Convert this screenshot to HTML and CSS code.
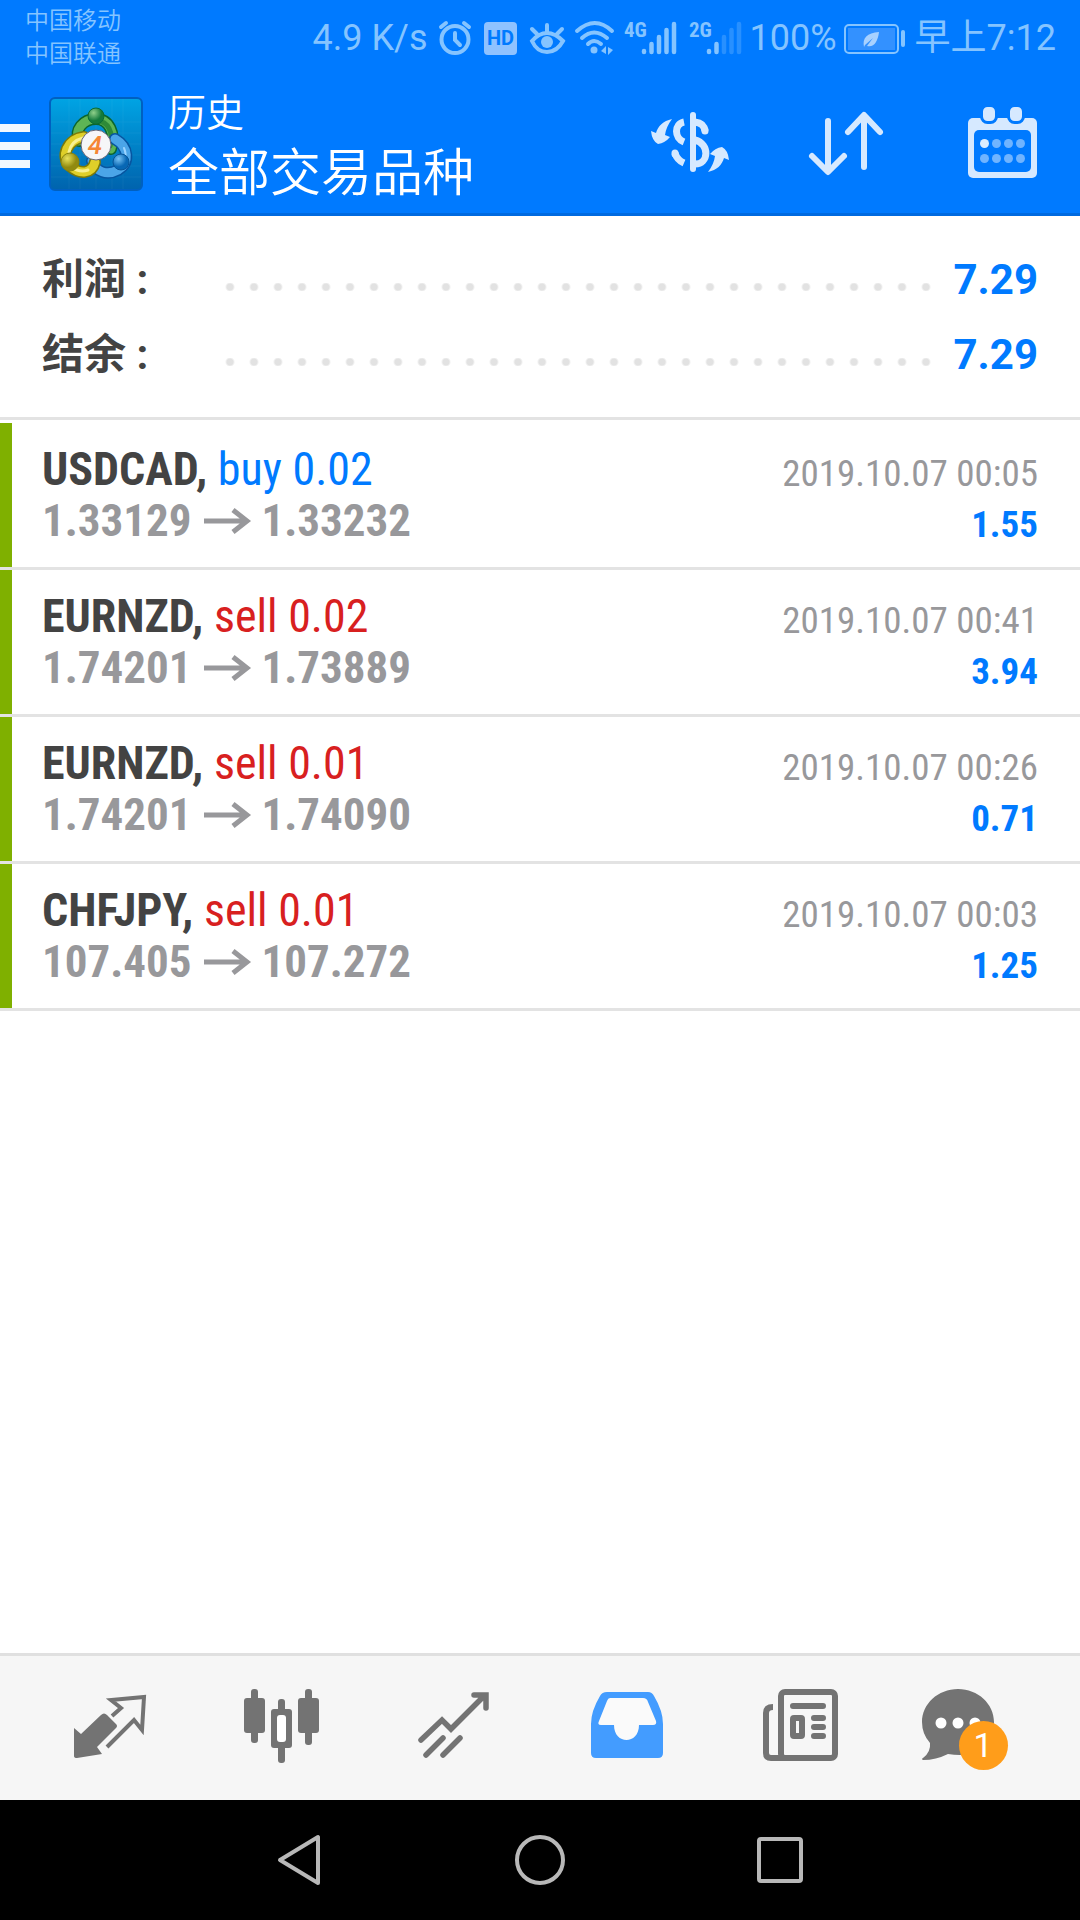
FILE: index.html
```html
<!DOCTYPE html>
<html lang="zh-CN">
<head>
<meta charset="utf-8">
<meta name="viewport" content="width=device-width, initial-scale=1">
<title>历史</title>
<link rel="stylesheet" href="styles.css">
</head>
<body>
<div class="app">
  <div class="top">
    <div class="status">
      <div class="carriers"><span>中国移动</span><span>中国联通</span></div>
      <div class="indicators">
        <span>4.9 K/s</span>
        <svg width="40" height="36" viewBox="-2 0 40 36" fill="none" stroke="currentColor" stroke-width="4" stroke-linecap="round"><circle cx="17" cy="19.500" r="13.500"/><path d="M3 7 8 3M31 7l-5-4M17 13v7l5 5"/></svg>
        <svg width="38" height="36" viewBox="0 0 38 36"><rect y="2" width="33" height="33" rx="4" fill="#8fc2ff"/><text class="hd" x="16.500" y="25" text-anchor="middle">HD</text></svg>
        <svg width="38" height="36" viewBox="0 0 38 36" fill="none" stroke="currentColor" stroke-width="4" stroke-linecap="round"><path d="M2 21Q9 13 17 13T33 21Q27 32 17 32T2 21ZM17 11V5M27 14l5-5M7 14 2 9"/><circle cx="17" cy="22" r="6" fill="currentColor" stroke="none"/></svg>
        <svg width="40" height="36" viewBox="0 0 40 36" fill="none" stroke="currentColor" stroke-width="4" stroke-linecap="round"><path d="M1 11Q19-5 36 11M6 18Q18 7 31 18M12 24Q18 18 25 24"/><circle cx="18" cy="30" r="3.500" fill="currentColor" stroke="none"/><path d="M30 26v8l-5-3zM32 35v-8l5 3z" fill="currentColor" stroke="none"/></svg>
        <svg width="57" height="36" viewBox="0 0 57 36" stroke="currentColor" stroke-width="4.500" stroke-linecap="round"><text class="net" x="0" y="17">4G</text><path d="M20 31v1M27.500 24v8M35 17v15M42.500 10v22M50 4v28"/></svg>
        <svg width="53" height="36" viewBox="0 0 53 36" stroke="currentColor" stroke-width="4.500" stroke-linecap="round"><text class="net" x="0" y="17">2G</text><path d="M20 31v1M27.500 24v8"/><path opacity=".3" d="M35 17v15M42.500 10v22M50 4v28"/></svg>
        <span>100%</span>
        <svg width="62" height="36" viewBox="0 0 62 36"><rect x="0" y="5" width="53" height="28" rx="4" fill="none" stroke="currentColor" stroke-width="2"/><rect x="3" y="8" width="47" height="22" fill="#3391ff"/><path d="M19 27c-2-9 3-14 15-15-1 9-5 16-12 14l6-8-8 7z" fill="#a8d1ff"/><path d="M58 12v13" stroke="currentColor" stroke-width="4" stroke-linecap="round"/></svg>
        <span>早上7:12</span>
      </div>
    </div>
    <header class="bar">
      <button class="menu" aria-label="菜单"><span></span><span></span><span></span></button>
      <svg class="logo" width="94" height="94" viewBox="0 0 94 94">
        <defs>
          <linearGradient id="bg" x2="0" y2="1"><stop stop-color="#00a4e4"/><stop offset="1" stop-color="#0063ad"/></linearGradient>
          <radialGradient id="g" cx=".35" cy=".3"><stop stop-color="#8fd08a"/><stop offset="1" stop-color="#147a3c"/></radialGradient>
          <radialGradient id="y" cx=".35" cy=".3"><stop stop-color="#e9e25a"/><stop offset="1" stop-color="#918a10"/></radialGradient>
          <radialGradient id="b" cx=".35" cy=".3"><stop stop-color="#79c4f5"/><stop offset="1" stop-color="#0767b4"/></radialGradient>
        </defs>
        <rect x="1" y="1" width="92" height="92" rx="5" fill="url(#bg)" stroke="#0060c0" stroke-width="2"/>
        <path d="M2 25h90M2 36h90M2 47h90M2 58h90M2 69h90M2 80h90M20 2v90M31 2v90M47 2v90M63 2v90M74 2v90" stroke="#fff" opacity=".04"/>
        <g fill="none" stroke-linecap="round">
          <path d="M62 52C67 36 60 22 47 22S25 33 30 44" stroke="#0c652d" stroke-width="12"/>
          <path d="M62 52C67 36 60 22 47 22S25 33 30 44" stroke="#5db555" stroke-width="9"/>
          <path d="M61 49C65 36 59 24 48 24" stroke="#2e8a38" stroke-width="5"/>
          <path d="M66 42C80 50 81 66 69 73 58 79 47 75 43 64" stroke="#0755a0" stroke-width="12"/>
          <path d="M66 42C80 50 81 66 69 73 58 79 47 75 43 64" stroke="#4ba5e8" stroke-width="9"/>
          <path d="M35 40C18 42 11 60 21 69 31 78 43 77 46 65" stroke="#7c7a08" stroke-width="12"/>
          <path d="M35 40C18 42 11 60 21 69 31 78 43 77 46 65" stroke="#dfcf29" stroke-width="9"/>
          <path d="M20 55Q22 44 34 41M22 70q9 6 17 3" stroke="#f7f091" stroke-width="3"/>
          <path d="M75 51q5 12-6 18" stroke="#9bd4ff" stroke-width="2"/>
        </g>
        <circle cx="47" cy="19" r="8" fill="url(#g)" stroke="#0b6c34"/>
        <circle cx="21" cy="65" r="9" fill="url(#y)" stroke="#8a850d"/>
        <circle cx="72" cy="65" r="8" fill="url(#b)" stroke="#075496"/>
        <circle cx="47" cy="48" r="15" fill="#f6f6f8" stroke="#667" stroke-width="1"/>
        <text class="four" x="46" y="57" text-anchor="middle">4</text>
      </svg>
      <div class="titles"><p>历史</p><h1>全部交易品种</h1></div>
      <div class="actions">
        <button aria-label="交易品种"><svg width="100" height="100" viewBox="0 0 100 100"><g fill="none" stroke="currentColor" stroke-width="7"><path d="M43 28C33 30 33 44 43 48M54 28Q63 29 64 37M54 46C69 50 68 70 54 70M43 69Q36 66 34 59"/><path d="M52 21v54" stroke-width="6" stroke-linecap="round"/><path d="M64 36v1M34 59v1" stroke-linecap="round"/></g><g fill="currentColor"><path id="swap" d="M31 25C22 27 17 32 15 39L10 37Q11 47 17 50 24 49 29 43L24 41Q25 33 31 25Z"/><use href="#swap" transform="rotate(180 49 51.500)"/></g></svg></button>
        <button aria-label="排序"><svg width="100" height="100" viewBox="0 0 100 100" fill="none" stroke="currentColor" stroke-width="6" stroke-linecap="round" stroke-linejoin="round"><path d="M31 27v50M15 62l16 16 16-16M67 73V22M51 38l16-17 16 17"/></svg></button>
        <button aria-label="选择时段"><svg width="100" height="100" viewBox="0 0 100 100"><rect x="15" y="24" width="69" height="60" rx="5" fill="currentColor"/><rect x="21" y="36" width="57" height="42" rx="5" fill="#007aff"/><g fill="currentColor" stroke="#007aff" stroke-width="3"><rect x="28.500" y="11.500" width="15" height="17" rx="6"/><rect x="55.500" y="11.500" width="15" height="17" rx="6"/></g><g fill="#70b4ff"><circle cx="31.500" cy="49.500" r="4.500" fill="#dcedff"/><circle cx="43.500" cy="49.500" r="4.500"/><circle cx="55.500" cy="49.500" r="4.500"/><circle cx="67.500" cy="49.500" r="4.500"/><circle cx="31.500" cy="64.500" r="4.500"/><circle cx="43.500" cy="64.500" r="4.500"/><circle cx="55.500" cy="64.500" r="4.500"/><circle cx="67.500" cy="64.500" r="4.500"/></g></svg></button>
      </div>
    </header>
  </div>

  <main>
    <dl class="summary">
      <div><dt>利润 :</dt><dd><i class="dots"></i>7.29</dd></div>
      <div><dt>结余 :</dt><dd><i class="dots"></i>7.29</dd></div>
    </dl>
    <ul class="trades">
      <li><div class="deal"><p><b>USDCAD,</b> <span class="buy">buy 0.02</span></p><p class="prices">1.33129 <svg width="46" height="26" viewBox="0 0 46 26"><path d="M0 13h44M29 2l14 11-14 11"/></svg> 1.33232</p></div><div class="result"><time>2019.10.07 00:05</time><b>1.55</b></div></li>
      <li><div class="deal"><p><b>EURNZD,</b> <span class="sell">sell 0.02</span></p><p class="prices">1.74201 <svg width="46" height="26" viewBox="0 0 46 26"><path d="M0 13h44M29 2l14 11-14 11"/></svg> 1.73889</p></div><div class="result"><time>2019.10.07 00:41</time><b>3.94</b></div></li>
      <li><div class="deal"><p><b>EURNZD,</b> <span class="sell">sell 0.01</span></p><p class="prices">1.74201 <svg width="46" height="26" viewBox="0 0 46 26"><path d="M0 13h44M29 2l14 11-14 11"/></svg> 1.74090</p></div><div class="result"><time>2019.10.07 00:26</time><b>0.71</b></div></li>
      <li><div class="deal"><p><b>CHFJPY,</b> <span class="sell">sell 0.01</span></p><p class="prices">107.405 <svg width="46" height="26" viewBox="0 0 46 26"><path d="M0 13h44M29 2l14 11-14 11"/></svg> 107.272</p></div><div class="result"><time>2019.10.07 00:03</time><b>1.25</b></div></li>
    </ul>
  </main>

  <nav class="tabs">
    <a href="#quotes" aria-label="行情"><svg width="100" height="100" viewBox="0 0 100 100"><path fill="currentColor" d="M16 50l7 6 20-19q3-3 6 0l9 9q2 2 0 4L39 69l5 7-25 4q-3 0-3-2z"/><path fill="none" stroke="currentColor" stroke-width="4" d="M54 38l9-8-10-8 33-3-2 33-8-10-27 27"/></svg></a>
    <a href="#charts" aria-label="图表"><svg width="100" height="100" viewBox="0 0 100 100" fill="currentColor"><rect x="13" y="20" width="21" height="35" rx="3"/><rect x="20" y="11" width="7" height="54" rx="3"/><rect x="67" y="20" width="21" height="35" rx="3"/><rect x="74" y="11" width="7" height="56" rx="3"/><rect x="47" y="21" width="7" height="64" rx="3"/><rect x="40" y="31" width="21" height="39" rx="3"/><rect x="46" y="37" width="9" height="27" rx="3" fill="#fff"/></svg></a>
    <a href="#trade" aria-label="交易"><svg width="100" height="100" viewBox="0 0 100 100" fill="none" stroke="currentColor" stroke-width="5.500" stroke-linecap="round"><path d="M17 62l21-20 9 9 33-33M70 17h12v13M22 77l17-17M39 77l17-17"/></svg></a>
    <a href="#history" class="active" aria-label="历史" aria-current="page"><svg width="100" height="100" viewBox="0 0 100 100"><path fill="currentColor" d="M31 14h41q4 0 6 4 9 15 9 28v29q0 5-5 5H20q-5 0-5-5V46q0-13 9-28 2-4 7-4z"/><path fill="#fafafa" d="M34 20h33q4 0 5 4l8 19q1 4-3 4H63c0 20-25 20-25 0H25q-4 0-2-4l8-20q1-3 3-3z"/></svg></a>
    <a href="#news" aria-label="新闻"><svg width="100" height="100" viewBox="0 0 100 100" fill="none" stroke="currentColor" stroke-width="6"><rect x="32" y="14" width="54" height="66" rx="4"/><path d="M24 29q-7 0-7 6v40q0 5 5 5h14"/><rect x="44" y="40" width="9" height="18" rx="1"/><path stroke-linecap="round" d="M44 28h30M65 40h9M65 49h9M65 58h9"/></svg></a>
    <a href="#messages" aria-label="消息"><svg width="100" height="100" viewBox="0 0 100 100"><path fill="currentColor" d="M36 11C56 11 72 26 72 44S56 77 38 77q-6 0-12-1-12 6-25 6-2-1 0-2 8-6 7-15Q0 56 0 44C0 26 16 11 36 11z"/><g fill="#fff"><circle cx="19" cy="45" r="5.500"/><circle cx="36" cy="45" r="5.500"/><circle cx="53" cy="45" r="5.500"/></g></svg><span class="badge">1</span></a>
  </nav>

  <div class="system">
    <button aria-label="返回"><svg width="60" height="60" viewBox="0 0 60 60"><path d="M10 30 48 7v46z"/></svg></button>
    <button aria-label="主页"><svg width="60" height="60" viewBox="0 0 60 60"><circle cx="30" cy="30" r="23"/></svg></button>
    <button aria-label="最近任务"><svg width="60" height="60" viewBox="0 0 60 60"><rect x="9" y="9" width="42" height="42" rx="2"/></svg></button>
  </div>
</div>
</body>
</html>
```
FILE: styles.css
```css
* { box-sizing: border-box; }

body, p, h1, ul, dl, dd { margin: 0; padding: 0; }

body {
  font-family: Roboto, "Noto Sans CJK SC", sans-serif;
  background: #fff;
  color: #434343;
}

button {
  padding: 0;
  border: 0;
  background: none;
  color: inherit;
}

svg { display: block; overflow: visible; }

.app {
  display: flex;
  flex-direction: column;
  min-height: 100vh;
}

.top {
  background: #007aff;
  border-bottom: 3px solid #006ae0;
}

/* status bar */
.status {
  display: flex;
  justify-content: space-between;
  height: 72px;
  padding: 5px 24px 0 25px;
  color: #85c4ff;
}

.carriers {
  display: flex;
  flex-direction: column;
  font-size: 24px;
  font-weight: 350;
  line-height: 33px;
}

.indicators {
  display: flex;
  align-items: center;
  gap: 8px;
  height: 66px;
  font-size: 36px;
  line-height: 66px;
  white-space: nowrap;
}

.hd { font-size: 20px; font-weight: 700; fill: #007aff; }

.net {
  font-family: "Roboto Condensed", "Liberation Sans Narrow", Roboto, sans-serif;
  font-size: 21px;
  font-weight: 700;
  fill: currentColor;
  stroke: none;
}

/* title bar */
.bar {
  display: flex;
  align-items: center;
  height: 141px;
  padding: 3px 27px 0 0;
  color: #d6e9ff;
}

.menu {
  display: grid;
  gap: 10px;
  width: 30px;
  padding-top: 3px;
  margin-right: 19px;
}

.menu span { height: 8px; background: #f2f8ff; }

.logo { flex: none; }

.four {
  font-size: 26px;
  font-style: italic;
  font-weight: 500;
  fill: #f58634;
}

.titles {
  flex: 1;
  padding-top: 6px;
  margin-left: 25px;
  color: #fff;
  font-weight: 350;
  white-space: nowrap;
}

.titles p { font-size: 38px; line-height: 52px; }
.titles h1 { font-size: 51px; font-weight: 350; line-height: 69px; }

.actions { display: flex; gap: 56px; }

/* totals */
main { flex: 1; }

.summary {
  padding: 26px 42px 25px;
  border-bottom: 3px solid #e3e3e3;
  font-size: 42px;
  font-weight: 700;
  line-height: 75px;
}

.summary div { display: flex; }
.summary dt { width: 176px; }

.summary dd {
  display: flex;
  flex: 1;
  align-items: center;
  color: #007aff;
}

.dots {
  flex: 1;
  height: 8px;
  margin: 15px 17px 0 0;
  background: radial-gradient(circle at 12px 4px, #e2e2e2 3px, transparent 5px) 0 0 / 24px 8px;
}

/* deals */
.trades {
  padding-top: 3px;
  list-style: none;
  font-family: "Roboto Condensed", "Liberation Sans Narrow", Roboto, sans-serif;
  white-space: nowrap;
}

.trades li {
  display: flex;
  justify-content: space-between;
  height: 147px;
  padding: 21px 42px 0;
  border-bottom: 3px solid #e3e3e3;
  background: linear-gradient(#7fb000, #7fb000) 0 0 / 12px 100% no-repeat;
}

.deal { font-size: 46px; line-height: 51px; }
.buy { color: #007aff; }
.sell { color: #d8201f; }

.prices {
  display: flex;
  align-items: center;
  gap: 12px;
  color: #98989b;
  font-size: 45px;
  font-weight: 700;
}

.prices path { fill: none; stroke: currentColor; stroke-width: 5; }

.result {
  display: flex;
  flex-direction: column;
  align-items: flex-end;
  padding-top: 4px;
  font-size: 37px;
  line-height: 51px;
  color: #98989b;
}

.result b { color: #007aff; }

/* app tabs */
.tabs {
  display: grid;
  grid-template-columns: repeat(6, 1fr);
  height: 147px;
  padding: 0 22px;
  border-top: 3px solid #e0e0e0;
  background: #f6f6f6;
}

.tabs a {
  position: relative;
  display: grid;
  place-items: center;
  color: #737373;
}

.tabs .active { color: #439cff; }

.badge {
  position: absolute;
  left: calc(50% - 13px);
  top: 65px;
  width: 49px;
  height: 49px;
  border-radius: 50%;
  background: #ff9d1a;
  color: #fff;
  font-size: 34px;
  line-height: 49px;
  text-align: center;
}

/* system navigation */
.system {
  display: grid;
  grid-template-columns: repeat(3, 1fr);
  height: 120px;
  padding: 0 180px;
  background: #000;
}

.system button { display: grid; place-items: center; }
.system svg { fill: none; stroke: #b8b8b8; stroke-width: 4; stroke-linejoin: round; }
```
